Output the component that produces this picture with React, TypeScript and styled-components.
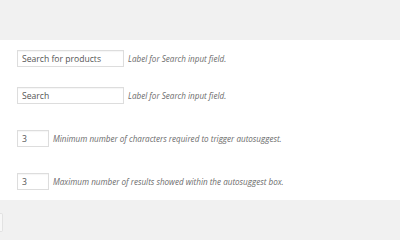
import styled, { createGlobalStyle } from 'styled-components';
import React from 'react';

const Global = createGlobalStyle`
  html, body {
    margin: 0;
    padding: 0;
    background: #f1f1f1;
    font-family: "Open Sans", "Liberation Sans", sans-serif;
  }
`;

const Page = styled.div`
  width: 400px;
  height: 240px;
  overflow: hidden;
  display: flex;
  flex-direction: column;
`;

const TopBand = styled.div`
  height: 40px;
  background: #f1f1f1;
`;

const Panel = styled.section`
  background: #fff;
  padding: 10px 0 10px 17px;
  display: flex;
  flex-direction: column;
`;

const Row = styled.div<{ $gap: number }>`
  display: flex;
  align-items: center;
  height: 17px;
  margin-top: ${p => p.$gap}px;
`;

const Field = styled.input<{ $w: number }>`
  box-sizing: border-box;
  width: ${p => p.$w}px;
  height: 17px;
  margin: 0;
  padding: 0 4px;
  border: 1px solid #dddddd;
  box-shadow: inset 0 1px 1px rgba(0, 0, 0, 0.04);
  background: #fff;
  color: #555;
  font-family: "Open Sans", "Liberation Sans", sans-serif;
  font-size: 8.6px;
  outline: none;
`;

const Hint = styled.span`
  margin-left: 4px;
  font-style: italic;
  font-size: 8.1px;
  color: #6b6b6b;
  white-space: nowrap;
`;

const Footer = styled.div`
  flex: 1;
  padding-top: 13px;
`;

const Stub = styled.div`
  width: 2px;
  height: 17px;
  background: #f7f7f7;
  border: 1px solid #e2e2e2;
  border-left: none;
  border-radius: 0 2px 2px 0;
`;

const rows = [
  { gap: 0, w: 107, value: 'Search for products', hint: 'Label for Search input field.' },
  { gap: 20, w: 107, value: 'Search', hint: 'Label for Search input field.' },
  { gap: 26, w: 32, value: '3', hint: 'Minimum number of characters required to trigger autosuggest.' },
  { gap: 26, w: 32, value: '3', hint: 'Maximum number of results showed within the autosuggest box.' },
];

export default function App() {
  return (
    <Page>
      <Global />
      <TopBand />
      <Panel>
        {rows.map((r, i) => (
          <Row key={i} $gap={r.gap}>
            <Field $w={r.w} defaultValue={r.value} />
            <Hint>{r.hint}</Hint>
          </Row>
        ))}
      </Panel>
      <Footer>
        <Stub />
      </Footer>
    </Page>
  );
}
